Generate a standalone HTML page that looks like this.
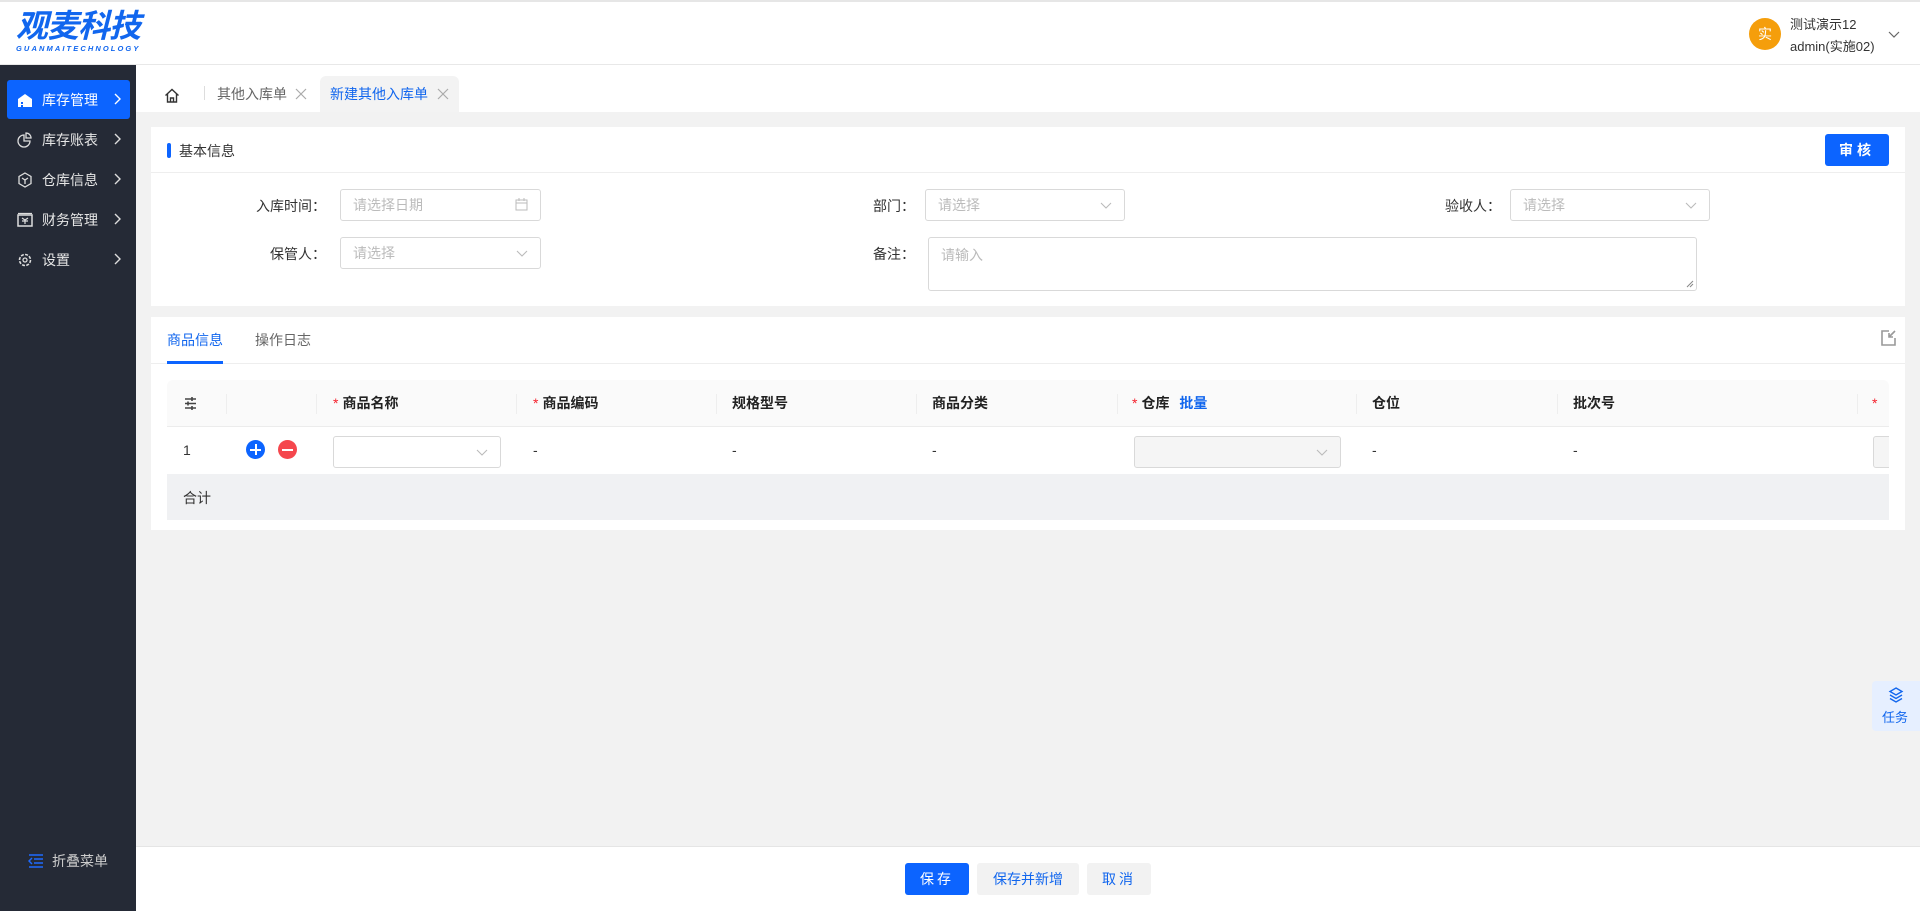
<!DOCTYPE html>
<html><head><meta charset="utf-8"><style>
*{box-sizing:border-box;margin:0;padding:0}
body{width:1920px;height:911px;overflow:hidden;font-family:"Liberation Sans","Noto Sans CJK SC",sans-serif;font-size:14px;color:#333;background:#f2f2f2;position:relative}
.abs{position:absolute}
.header{left:0;top:0;width:1920px;height:65px;background:#fff;border-bottom:1px solid #e8e8e8;border-top:2px solid #e6e6e6}
.side{left:0;top:65px;width:136px;height:846px;background:#252a36}
.mi{position:absolute;left:7px;width:123px;height:39px;color:#e6e6e6;font-size:14px;display:flex;align-items:center;padding-left:10px}
.mi svg{margin-right:9px}
.mi svg.ar{position:absolute;left:106px;top:12px;margin:0}
.card{background:#fff}
.lbl{position:absolute;text-align:right;font-size:14px;color:#333}
.inp{position:absolute;border:1px solid #d9d9d9;border-radius:3px;background:#fff;color:#bbb;font-size:14px;padding-left:12px;display:flex;align-items:center}
.chev{position:absolute;right:12px;top:50%;margin-top:-6px}
.th{position:absolute;top:0;height:47px;line-height:47px;font-weight:bold;color:#222;font-size:14px}
.sep{position:absolute;top:14px;width:1px;height:20px;background:#eee}
.st{color:#f5222d;font-weight:normal;margin-right:4px}
.btn{position:absolute;top:863px;height:32px;border-radius:3px;font-size:14px;display:flex;align-items:center;justify-content:center}
</style></head><body>
<div class="abs header">
  <div class="abs" style="left:16px;top:6px;font-size:32px;font-style:italic;font-weight:bold;color:#1166ee;letter-spacing:-1px;line-height:36px">观麦科技</div>
  <div class="abs" style="left:16px;top:42px;font-size:7.5px;font-style:italic;font-weight:bold;color:#1166ee;letter-spacing:2.1px">GUANMAITECHNOLOGY</div>
  <div class="abs" style="left:1749px;top:16px;width:32px;height:32px;border-radius:50%;background:#f59e0b;color:#fff;font-size:14px;text-align:center;line-height:32px">实</div>
  <div class="abs" style="left:1790px;top:12px;font-size:13px;color:#333;line-height:22px">测试演示12<br>admin(实施02)</div>
  <svg class="abs" style="left:1888px;top:27px" width="12" height="12" viewBox="0 0 12 12"><path d="M1 3l5 5 5-5" fill="none" stroke="#666" stroke-width="1.2"/></svg>
</div>
<div class="abs side">
  <div class="mi" style="top:15px;background:#0c64ff;border-radius:3px;color:#fff"><svg width="16" height="16" viewBox="0 0 16 16"><path d="M1 7L8 2l7 5v8H1z" fill="#fff"/><rect x="4" y="10" width="2" height="2" fill="#0c64ff"/><rect x="4" y="13" width="2" height="2" fill="#0c64ff"/></svg>库存管理<svg class="ar" width="10" height="14" viewBox="0 0 10 14"><path d="M2 2l5 5-5 5" fill="none" stroke="#fff" stroke-width="1.4"/></svg></div>
  <div class="mi" style="top:55px"><svg width="16" height="16" viewBox="0 0 16 16"><path d="M7 3a6 6 0 1 0 6 6H7z" fill="none" stroke="#ddd" stroke-width="1.3"/><path d="M9 1v5h5a5 5 0 0 0-5-5z" fill="none" stroke="#ddd" stroke-width="1.3"/></svg>库存账表<svg class="ar" width="10" height="14" viewBox="0 0 10 14"><path d="M2 2l5 5-5 5" fill="none" stroke="#ddd" stroke-width="1.4"/></svg></div>
  <div class="mi" style="top:95px"><svg width="16" height="16" viewBox="0 0 16 16"><path d="M8 1l6 3.5v7L8 15l-6-3.5v-7z" fill="none" stroke="#ddd" stroke-width="1.3"/><path d="M5 6l3 2 3-2M8 8v4" fill="none" stroke="#ddd" stroke-width="1.3"/></svg>仓库信息<svg class="ar" width="10" height="14" viewBox="0 0 10 14"><path d="M2 2l5 5-5 5" fill="none" stroke="#ddd" stroke-width="1.4"/></svg></div>
  <div class="mi" style="top:135px"><svg width="16" height="16" viewBox="0 0 16 16"><rect x="1" y="3" width="14" height="11" fill="none" stroke="#ddd" stroke-width="1.5"/><path d="M1 1.5h14M5 6l3 2 3-2M5 9h6M8 8v4" fill="none" stroke="#ddd" stroke-width="1.2"/></svg>财务管理<svg class="ar" width="10" height="14" viewBox="0 0 10 14"><path d="M2 2l5 5-5 5" fill="none" stroke="#ddd" stroke-width="1.4"/></svg></div>
  <div class="mi" style="top:175px"><svg width="16" height="16" viewBox="0 0 16 16"><circle cx="8" cy="8" r="5.5" fill="none" stroke="#ddd" stroke-width="1.6" stroke-dasharray="3 1.3"/><circle cx="8" cy="8" r="2" fill="none" stroke="#ddd" stroke-width="1.3"/></svg>设置<svg class="ar" width="10" height="14" viewBox="0 0 10 14"><path d="M2 2l5 5-5 5" fill="none" stroke="#ddd" stroke-width="1.4"/></svg></div>
  <div class="abs" style="left:28px;top:786px;color:#ccc;font-size:14px;display:flex;align-items:center"><svg width="16" height="14" viewBox="0 0 16 14" style="margin-right:8px"><path d="M1 1h14M6 5h9M6 9h9M1 13h14M4 4L1 7l3 3" fill="none" stroke="#1e6bff" stroke-width="1.5"/></svg>折叠菜单</div>
</div>
<!-- tab bar -->
<div class="abs" style="left:136px;top:65px;width:1784px;height:47px;background:#fff"></div>
<svg class="abs" style="left:164px;top:88px" width="16" height="15" viewBox="0 0 16 15"><path d="M1.5 7.5L8 1.5l6.5 6M3.5 6v8h9V6M6.5 14v-4h3v4" fill="none" stroke="#333" stroke-width="1.4"/></svg>
<div class="abs" style="left:204px;top:86px;width:1px;height:14px;background:#ddd"></div>
<div class="abs" style="left:217px;top:84px;color:#666;font-size:14px">其他入库单</div>
<svg class="abs" style="left:295px;top:88px" width="12" height="12" viewBox="0 0 12 12"><path d="M1 1l10 10M11 1L1 11" stroke="#aaa" stroke-width="1.2"/></svg>
<div class="abs" style="left:320px;top:76px;width:139px;height:36px;background:#f3f3f3;border-radius:6px 6px 0 0"></div>
<div class="abs" style="left:330px;top:84px;color:#1166ee;font-size:14px">新建其他入库单</div>
<svg class="abs" style="left:437px;top:88px" width="12" height="12" viewBox="0 0 12 12"><path d="M1 1l10 10M11 1L1 11" stroke="#aaa" stroke-width="1.2"/></svg>
<!-- card 1 -->
<div class="abs card" style="left:151px;top:127px;width:1754px;height:179px"></div>
<div class="abs" style="left:151px;top:172px;width:1754px;height:1px;background:#eee"></div>
<div class="abs" style="left:167px;top:143px;width:4px;height:15px;background:#0c64ff;border-radius:2px"></div>
<div class="abs" style="left:179px;top:141px;font-size:14px;color:#333">基本信息</div>
<div class="abs" style="left:1825px;top:134px;width:64px;height:32px;background:#0c64ff;border-radius:3px;color:#fff;font-size:14px;text-align:center;line-height:32px;letter-spacing:4px;font-weight:bold">审核</div>
<div class="lbl" style="left:200px;width:126px;top:196px">入库时间：</div>
<div class="inp" style="left:340px;top:189px;width:201px;height:32px">请选择日期<svg class="chev" width="13" height="13" viewBox="0 0 13 13" style="margin-top:-7px"><rect x="1" y="2" width="11" height="10" fill="none" stroke="#bbb"/><path d="M1 5h11M4 0v3M9 0v3" stroke="#bbb"/></svg></div>
<div class="lbl" style="left:800px;width:115px;top:196px">部门：</div>
<div class="inp" style="left:925px;top:189px;width:200px;height:32px">请选择<svg class="chev" width="12" height="12" viewBox="0 0 12 12"><path d="M1 4l5 5 5-5" fill="none" stroke="#bbb" stroke-width="1.1"/></svg></div>
<div class="lbl" style="left:1380px;width:121px;top:196px">验收人：</div>
<div class="inp" style="left:1510px;top:189px;width:200px;height:32px">请选择<svg class="chev" width="12" height="12" viewBox="0 0 12 12"><path d="M1 4l5 5 5-5" fill="none" stroke="#bbb" stroke-width="1.1"/></svg></div>
<div class="lbl" style="left:200px;width:126px;top:244px">保管人：</div>
<div class="inp" style="left:340px;top:237px;width:201px;height:32px">请选择<svg class="chev" width="12" height="12" viewBox="0 0 12 12"><path d="M1 4l5 5 5-5" fill="none" stroke="#bbb" stroke-width="1.1"/></svg></div>
<div class="lbl" style="left:800px;width:115px;top:244px">备注：</div>
<div class="inp" style="left:928px;top:237px;width:769px;height:54px;align-items:flex-start;padding-top:7px">请输入<svg class="abs" style="right:2px;bottom:2px" width="8" height="8" viewBox="0 0 8 8"><path d="M7 1L1 7M7 4L4 7" stroke="#888"/></svg></div>
<!-- card 2 -->
<div class="abs card" style="left:151px;top:317px;width:1754px;height:213px"></div>
<div class="abs" style="left:167px;top:330px;color:#1166ee;font-size:14px">商品信息</div>
<div class="abs" style="left:255px;top:330px;color:#666;font-size:14px">操作日志</div>
<div class="abs" style="left:151px;top:363px;width:1754px;height:1px;background:#eee"></div>
<div class="abs" style="left:167px;top:361px;width:56px;height:3px;background:#0c64ff"></div>
<svg class="abs" style="left:1880px;top:329px" width="17" height="18" viewBox="0 0 17 18"><path d="M9 2H2v14h13V9" fill="none" stroke="#999" stroke-width="1.6"/><path d="M15 2L9 8M9 4v4h4" fill="none" stroke="#999" stroke-width="1.6"/></svg>
<div class="abs" style="left:167px;top:380px;width:1722px;height:47px;background:#fafafa;border-radius:6px 6px 0 0;border-bottom:1px solid #ececec;overflow:hidden">
  <svg class="abs" style="left:17px;top:17px" width="13" height="13" viewBox="0 0 13 13"><path d="M1 2h11M1 6.5h11M1 11h11" stroke="#444" stroke-width="1.6"/><path d="M8 0v4M4 4.5v4M8 9v4" stroke="#444" stroke-width="1.6"/></svg>
  <div class="sep" style="left:59px"></div><div class="sep" style="left:149px"></div><div class="sep" style="left:349px"></div><div class="sep" style="left:549px"></div><div class="sep" style="left:749px"></div><div class="sep" style="left:950px"></div><div class="sep" style="left:1189px"></div><div class="sep" style="left:1390px"></div><div class="sep" style="left:1690px"></div>
  <div class="th" style="left:166px"><span class="st">*</span>商品名称</div>
  <div class="th" style="left:366px"><span class="st">*</span>商品编码</div>
  <div class="th" style="left:549px;padding-left:16px">规格型号</div>
  <div class="th" style="left:749px;padding-left:16px">商品分类</div>
  <div class="th" style="left:965px"><span class="st">*</span>仓库 <span style="color:#1166ee;margin-left:6px">批量</span></div>
  <div class="th" style="left:1189px;padding-left:16px">仓位</div>
  <div class="th" style="left:1390px;padding-left:16px">批次号</div>
  <div class="th" style="left:1705px"><span class="st">*</span>单</div>
</div>
<div class="abs" style="left:167px;top:427px;width:1722px;height:47px;background:#fff;overflow:hidden">
  <div class="abs" style="left:16px;top:0;line-height:47px">1</div>
  <div class="abs" style="left:79px;top:13px;width:19px;height:19px;border-radius:50%;background:#0c64ff"><div class="abs" style="left:4px;top:8.5px;width:11px;height:2px;background:#fff"></div><div class="abs" style="left:8.5px;top:4px;width:2px;height:11px;background:#fff"></div></div>
  <div class="abs" style="left:111px;top:13px;width:19px;height:19px;border-radius:50%;background:#f5474d"><div class="abs" style="left:4px;top:8.5px;width:11px;height:2px;background:#fff"></div></div>
  <div class="inp" style="left:166px;top:9px;width:168px;height:32px"><svg class="chev" width="12" height="12" viewBox="0 0 12 12"><path d="M1 4l5 5 5-5" fill="none" stroke="#bbb" stroke-width="1.1"/></svg></div>
  <div class="abs" style="left:366px;line-height:47px">-</div>
  <div class="abs" style="left:565px;line-height:47px">-</div>
  <div class="abs" style="left:765px;line-height:47px">-</div>
  <div class="inp" style="left:967px;top:9px;width:207px;height:32px;background:#f5f5f5"><svg class="chev" width="12" height="12" viewBox="0 0 12 12"><path d="M1 4l5 5 5-5" fill="none" stroke="#bbb" stroke-width="1.1"/></svg></div>
  <div class="abs" style="left:1205px;line-height:47px">-</div>
  <div class="abs" style="left:1406px;line-height:47px">-</div>
  <div class="inp" style="left:1706px;top:9px;width:60px;height:32px;background:#f5f5f5"></div>
</div>
<div class="abs" style="left:167px;top:474px;width:1722px;height:46px;background:#f0f1f3"><div class="abs" style="left:16px;top:14px">合计</div></div>
<!-- task -->
<div class="abs" style="left:1872px;top:681px;width:48px;height:50px;background:#e6efff;border-radius:4px 0 0 4px">
  <svg class="abs" style="left:16px;top:6px" width="16" height="16" viewBox="0 0 16 16"><path d="M8 1l6 3.5-6 3.5-6-3.5z" fill="none" stroke="#1166ee" stroke-width="1.4"/><path d="M2 8l6 3.5L14 8M2 11.5L8 15l6-3.5" fill="none" stroke="#1166ee" stroke-width="1.4"/></svg>
  <div class="abs" style="left:10px;top:26px;color:#1166ee;font-size:13px">任务</div>
</div>
<!-- footer -->
<div class="abs" style="left:136px;top:846px;width:1784px;height:65px;background:#fff;border-top:1px solid #e5e5e5"></div>
<div class="btn" style="left:905px;width:64px;background:#0c64ff;color:#fff;letter-spacing:3px">保存</div>
<div class="btn" style="left:977px;width:102px;background:#f2f2f2;color:#1166ee">保存并新增</div>
<div class="btn" style="left:1087px;width:64px;background:#f2f2f2;color:#1166ee;letter-spacing:3px">取消</div>
</body></html>
